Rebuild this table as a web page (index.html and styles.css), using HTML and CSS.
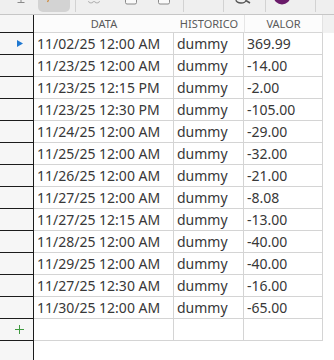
FILE: index.html
```html
<!DOCTYPE html>
<html>
<head>
<meta charset="utf-8">
<link rel="stylesheet" href="styles.css">
</head>
<body>
<div class="toolbar">
  <svg class="ti i-dl" width="8" height="14" viewBox="0 0 8 14"><path d="M4 0v2M0.5 2.5h7" stroke="#8a8a8a" stroke-width="1" fill="none"/></svg>
  <div class="tbtn"><svg width="32" height="12" viewBox="0 0 32 12"><path d="M10.5 0l-1 2" stroke="#d08a3a" stroke-width="1.2" fill="none"/></svg></div>
  <span class="tsep s1"></span>
  <svg class="ti i-link" width="12" height="14" viewBox="0 0 12 14"><path d="M0.5 1a2.5 2 0 0 0 5 0M6.5 1a2.5 2 0 0 0 5 0" stroke="#b0b0b0" stroke-width="1" fill="none"/></svg>
  <svg class="ti i-sq1" width="12" height="14" viewBox="0 0 12 14"><path d="M0.5 0v2.5a1.5 1.5 0 0 0 1.5 1.5h8a1.5 1.5 0 0 0 1.5-1.5V0" stroke="#8a8a8a" stroke-width="1" fill="#fafafa"/></svg>
  <svg class="ti i-sq2" width="12" height="14" viewBox="0 0 12 14"><path d="M0.5 0v2.5a1.5 1.5 0 0 0 1.5 1.5h8a1.5 1.5 0 0 0 1.5-1.5V0" stroke="#8a8a8a" stroke-width="1" fill="#fafafa"/></svg>
  <span class="tsep s2"></span>
  <span class="tsep s3"></span>
  <svg class="ti i-search" width="20" height="14" viewBox="0 0 20 14"><path d="M3 0a5 3 0 0 0 10 0" stroke="#555" stroke-width="1.3" fill="none"/><path d="M13 0.5l4 2.5" stroke="#555" stroke-width="1.5"/></svg>
  <span class="tsep s4"></span>
  <svg class="ti i-av" width="18" height="14" viewBox="0 0 18 14"><circle cx="9" cy="-4" r="8.5" fill="#6a1b6a"/></svg>
  <span class="tsep s5"></span>
</div>
<div class="grid">
  <div class="rh hdr"></div>
  <div class="ch c-data">DATA</div>
  <div class="ch c-hist">HISTORICO</div>
  <div class="ch c-val">VALOR</div>
  <div class="ch fill"></div>

  <div class="rh"><svg width="6" height="7" viewBox="0 0 6 7"><path d="M0 0L6 3.5L0 7z" fill="#1f78d1"/></svg></div>
  <div class="cell">11/02/25 12:00 AM</div><div class="cell">dummy</div><div class="cell">369.99</div><div class="fill"></div>

  <div class="rh"></div><div class="cell">11/23/25 12:00 AM</div><div class="cell">dummy</div><div class="cell">-14.00</div><div class="fill"></div>
  <div class="rh"></div><div class="cell">11/23/25 12:15 PM</div><div class="cell">dummy</div><div class="cell">-2.00</div><div class="fill"></div>
  <div class="rh"></div><div class="cell">11/23/25 12:30 PM</div><div class="cell">dummy</div><div class="cell">-105.00</div><div class="fill"></div>
  <div class="rh"></div><div class="cell">11/24/25 12:00 AM</div><div class="cell">dummy</div><div class="cell">-29.00</div><div class="fill"></div>
  <div class="rh"></div><div class="cell">11/25/25 12:00 AM</div><div class="cell">dummy</div><div class="cell">-32.00</div><div class="fill"></div>
  <div class="rh"></div><div class="cell">11/26/25 12:00 AM</div><div class="cell">dummy</div><div class="cell">-21.00</div><div class="fill"></div>
  <div class="rh"></div><div class="cell">11/27/25 12:00 AM</div><div class="cell">dummy</div><div class="cell">-8.08</div><div class="fill"></div>
  <div class="rh"></div><div class="cell">11/27/25 12:15 AM</div><div class="cell">dummy</div><div class="cell">-13.00</div><div class="fill"></div>
  <div class="rh"></div><div class="cell">11/28/25 12:00 AM</div><div class="cell">dummy</div><div class="cell">-40.00</div><div class="fill"></div>
  <div class="rh"></div><div class="cell">11/29/25 12:00 AM</div><div class="cell">dummy</div><div class="cell">-40.00</div><div class="fill"></div>
  <div class="rh"></div><div class="cell">11/27/25 12:30 AM</div><div class="cell">dummy</div><div class="cell">-16.00</div><div class="fill"></div>
  <div class="rh"></div><div class="cell">11/30/25 12:00 AM</div><div class="cell">dummy</div><div class="cell">-65.00</div><div class="fill"></div>

  <div class="rh plus"><svg width="9" height="9" viewBox="0 0 9 9"><path d="M4.5 0v9M0 4.5h9" stroke="#3f9a3f" stroke-width="1"/></svg></div>
  <div class="cell"></div><div class="cell"></div><div class="cell"></div><div class="fill"></div>

  <div class="rh rest"></div>
</div>
</body>
</html>
```

FILE: styles.css
```css
html, body {
  margin: 0;
  padding: 0;
  background: #ffffff;
  width: 334px;
  height: 360px;
  overflow: hidden;
}

.toolbar {
  display: flex;
  align-items: flex-start;
  height: 14px;
  background: #efefef;
  border-bottom: 1px solid #c6c6c6;
  overflow: hidden;
}

.ti { display: block; flex: none; }
.i-dl { margin-left: 17px; }
.tbtn {
  margin-left: 13px;
  width: 32px;
  height: 12px;
  background: #d3d3d3;
  border-radius: 0 0 5px 5px;
  flex: none;
}
.tbtn svg { display: block; }
.tsep {
  display: block;
  width: 1px;
  height: 12px;
  background: #d2d2d2;
  flex: none;
}
.s1 { margin-left: 5px; }
.i-link { margin-left: 12px; }
.i-sq1 { margin-left: 25px; }
.i-sq2 { margin-left: 21px; }
.s2 { margin-left: 13px; }
.s3 { margin-left: 39px; }
.i-search { margin-left: 9px; }
.s4 { margin-left: 12px; }
.i-av { margin-left: 7px; }
.s5 { margin-left: 24px; }

.grid {
  display: grid;
  grid-template-columns: 34px 140px 70px 79px 1fr;
  grid-auto-rows: 22px;
  grid-template-rows: 18px;
  font-family: "Noto Sans", "Open Sans", sans-serif;
}

.rh {
  background: #f6f6f6;
  border-right: 1px solid #1c1c1c;
  border-bottom: 1px solid #1c1c1c;
  display: flex;
  align-items: center;
  justify-content: center;
  padding-left: 6px;
}
.rh svg { display: block; }
.rh.hdr { padding-left: 0; }
.rh.plus { padding-left: 6px; }
.rh.rest { border-bottom: none; height: 30px; }

.ch {
  font-size: 11px;
  line-height: 17px;
  color: #5a5a5a;
  text-align: center;
  background: #fcfcfc;
  border-bottom: 1px solid #d6d6d6;
}
.c-val { border-left: 1px solid #e6e6e6; border-right: 1px solid #e2e2e2; }
.ch.fill { background: #f1f1f1; border-bottom: none; }

.cell {
  font-size: 14px;
  line-height: 21px;
  color: #383838;
  padding-left: 3px;
  border-right: 1px solid #d4d4d4;
  border-bottom: 1px solid #d4d4d4;
  white-space: nowrap;
  overflow: hidden;
}

.fill { background: #ffffff; }
```
